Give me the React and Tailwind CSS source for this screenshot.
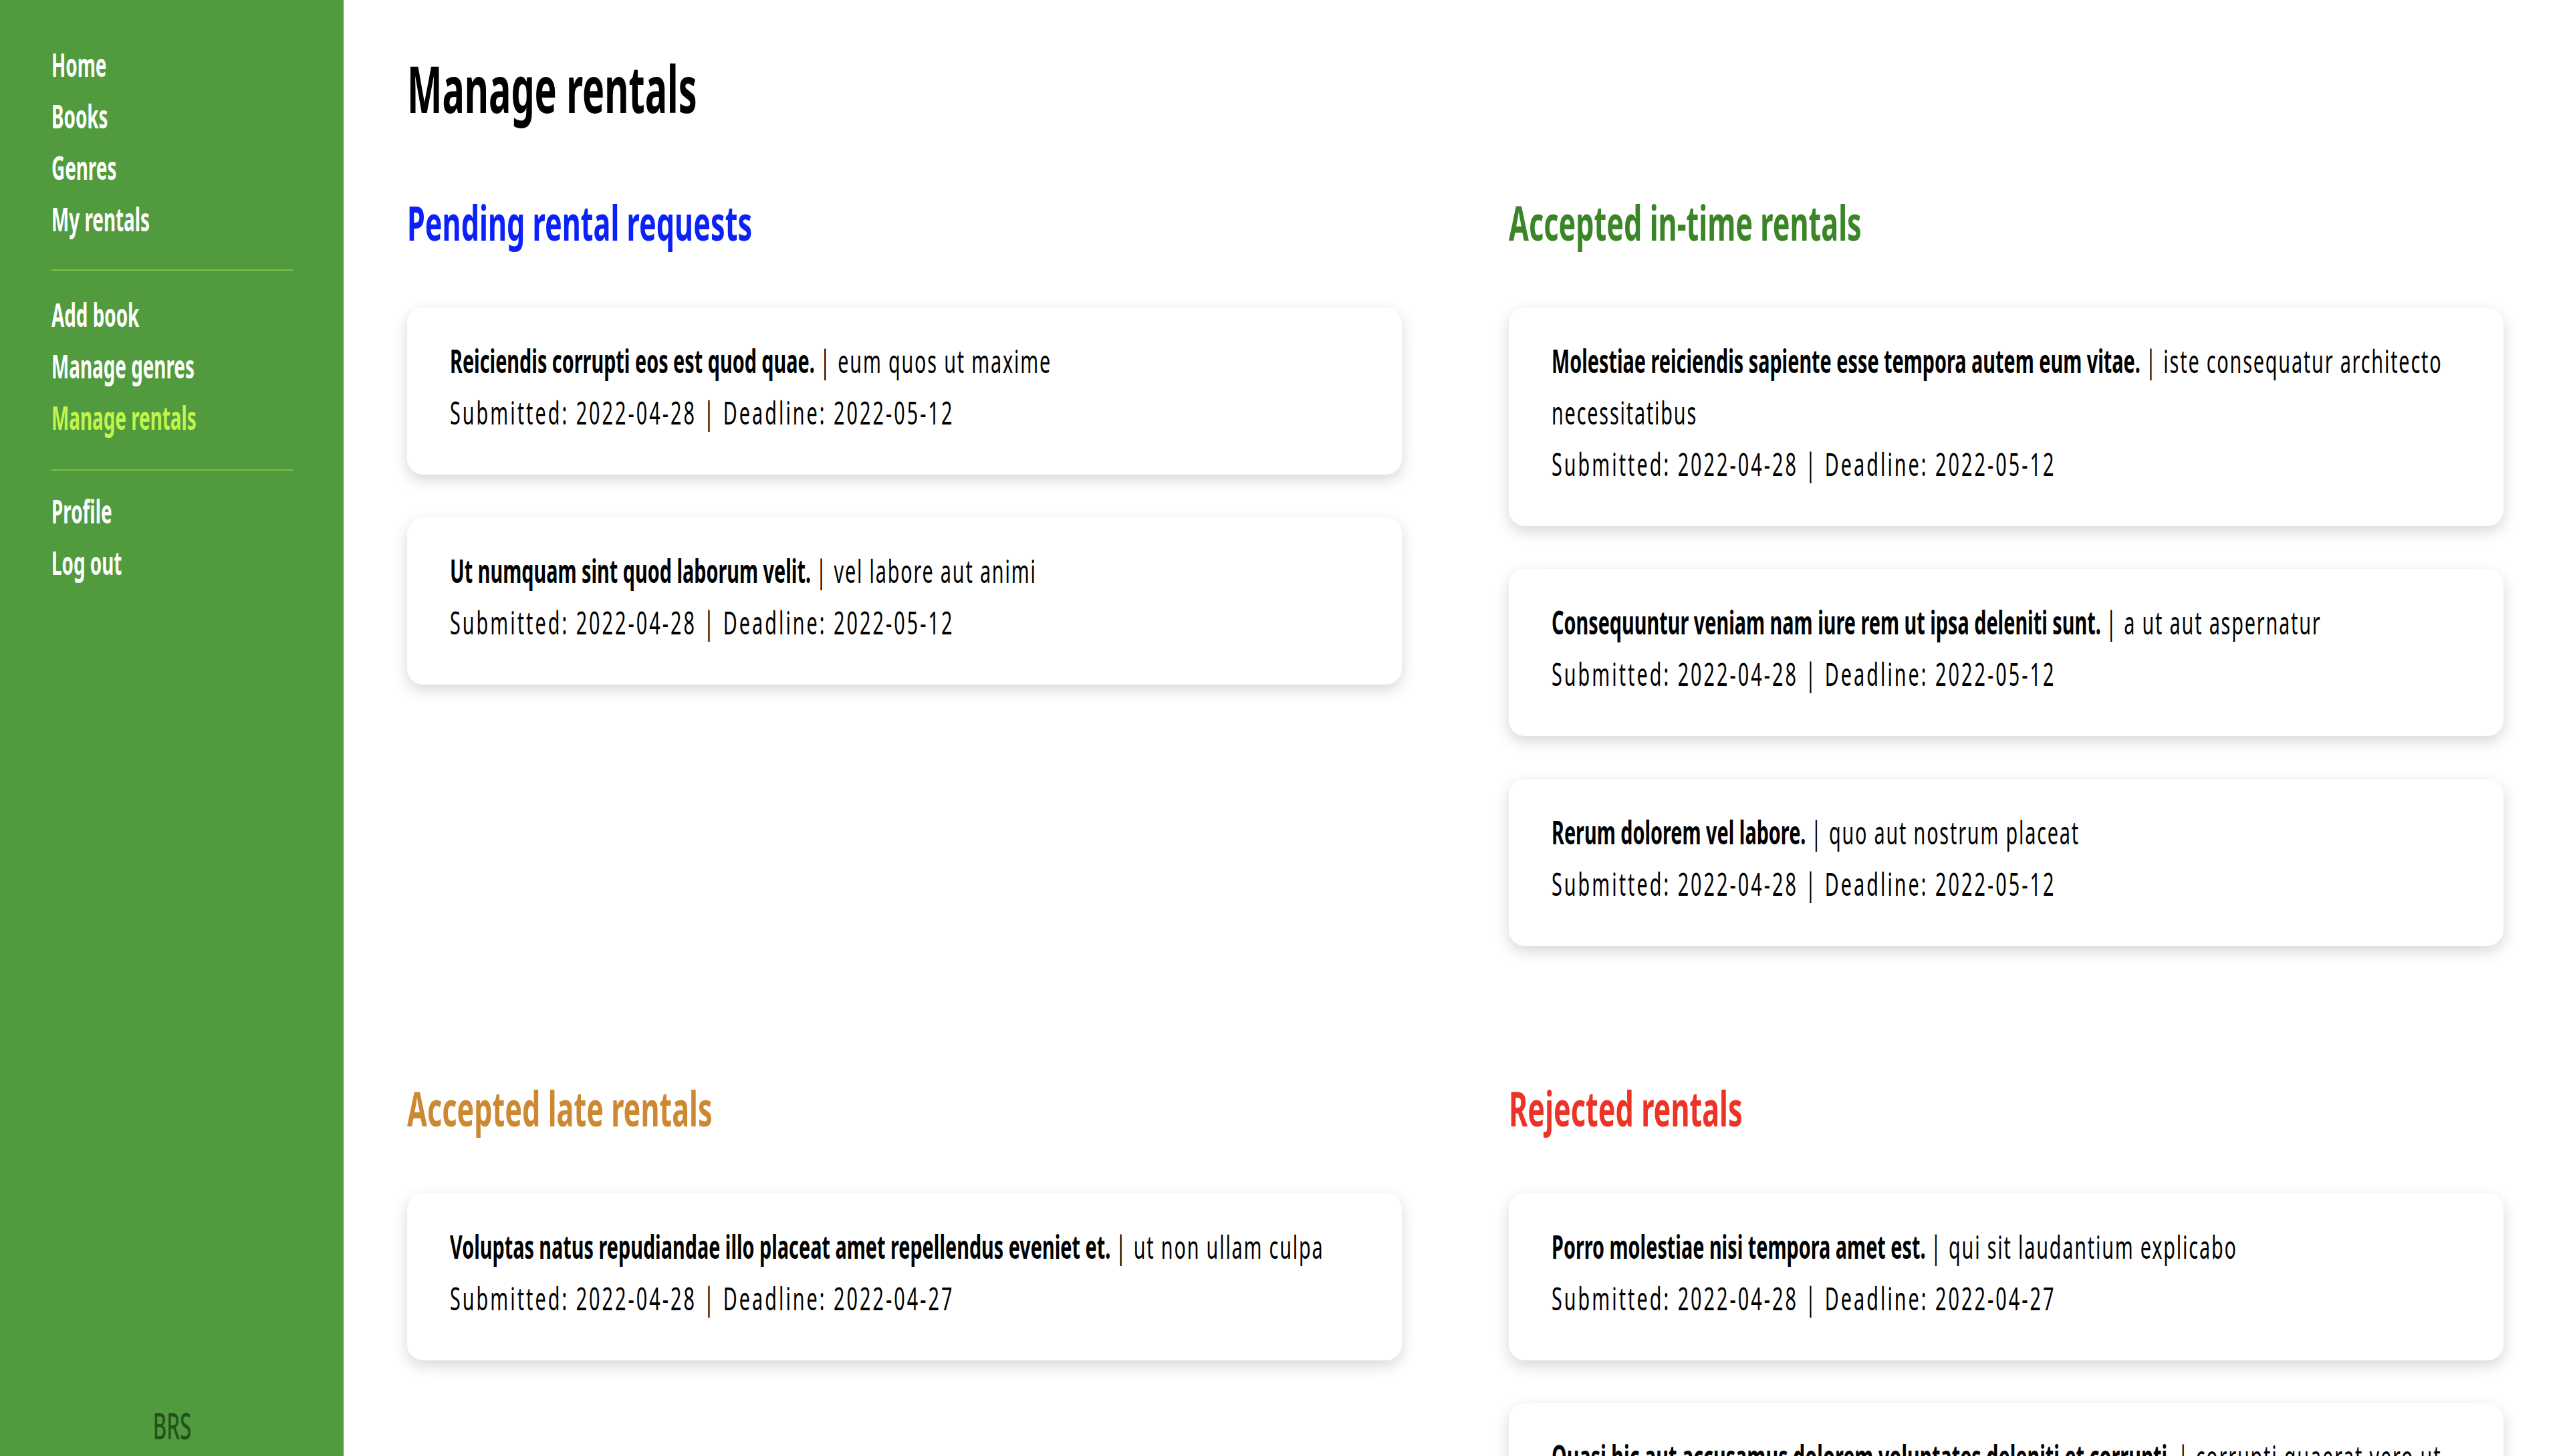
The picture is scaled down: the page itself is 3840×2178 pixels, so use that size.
import React from "react";

const pending = [
  { title: "Reiciendis corrupti eos est quod quae.", author: "eum quos ut maxime", submitted: "2022-04-28", deadline: "2022-05-12" },
  { title: "Ut numquam sint quod laborum velit.", author: "vel labore aut animi", submitted: "2022-04-28", deadline: "2022-05-12" },
];

const inTime = [
  { title: "Molestiae reiciendis sapiente esse tempora autem eum vitae.", author: "iste consequatur architecto", author2: "necessitatibus", submitted: "2022-04-28", deadline: "2022-05-12" },
  { title: "Consequuntur veniam nam iure rem ut ipsa deleniti sunt.", author: "a ut aut aspernatur", submitted: "2022-04-28", deadline: "2022-05-12" },
  { title: "Rerum dolorem vel labore.", author: "quo aut nostrum placeat", submitted: "2022-04-28", deadline: "2022-05-12" },
];

const late = [
  { title: "Voluptas natus repudiandae illo placeat amet repellendus eveniet et.", author: "ut non ullam culpa", submitted: "2022-04-28", deadline: "2022-04-27" },
];

const rejected = [
  { title: "Porro molestiae nisi tempora amet est.", author: "qui sit laudantium explicabo", submitted: "2022-04-28", deadline: "2022-04-27" },
  { title: "Quasi hic aut accusamus dolorem voluptates deleniti et corrupti.", author: "corrupti quaerat vero ut", author2: "enim", submitted: "2022-04-28", deadline: "2022-05-12" },
];

function Card({ r }) {
  return (
    <div className="bg-white rounded-[24px] shadow-[0_8px_22px_rgba(0,0,0,0.16)] px-[64px] pt-[41px] pb-[55px] text-[48px] leading-[77px] font-normal text-black">
      <div className="w-[166.67%] origin-left scale-x-[0.6]">
        <div>
          <span className="font-bold">{r.title}</span>{" "}
          <span className="tracking-[3px]">
            | {r.author}
            {r.author2 ? (
              <>
                <br />
                {r.author2}
              </>
            ) : null}
          </span>
        </div>
        <div className="tracking-[5px]">
          Submitted: {r.submitted} | Deadline: {r.deadline}
        </div>
      </div>
    </div>
  );
}

function Section({ title, color, items }) {
  return (
    <section>
      <h2 className={`text-[72px] leading-[86px] font-bold mb-[85px] whitespace-nowrap ${color}`}>
        <span className="inline-block origin-left scale-x-[0.6]">{title}</span>
      </h2>
      <div className="flex flex-col gap-[64px]">
        {items.map((r, i) => (
          <Card key={i} r={r} />
        ))}
      </div>
    </section>
  );
}

function NavLink({ children, active }) {
  return (
    <a href="#" className={`block whitespace-nowrap text-[48px] leading-[77px] font-bold ${active ? "text-[#c3f44e]" : "text-white"}`}>
      <span className="inline-block origin-left scale-x-[0.58]">{children}</span>
    </a>
  );
}

export default function App() {
  return (
    <div className="flex h-screen overflow-hidden bg-white font-['Noto_Sans','Liberation_Sans',sans-serif]">
      <aside className="w-[514px] shrink-0 bg-[#519b3e] flex flex-col pl-[77px] pr-[76px] pt-[58px] pb-[16px]">
        <nav className="flex flex-col">
          <NavLink>Home</NavLink>
          <NavLink>Books</NavLink>
          <NavLink>Genres</NavLink>
          <NavLink>My rentals</NavLink>
          <div className="h-[2px] bg-[#7cc144] mt-[37px] mb-[27px]" />
          <NavLink>Add book</NavLink>
          <NavLink>Manage genres</NavLink>
          <NavLink active>Manage rentals</NavLink>
          <div className="h-[2px] bg-[#7cc144] mt-[39px] mb-[22px]" />
          <NavLink>Profile</NavLink>
          <NavLink>Log out</NavLink>
        </nav>
        <div className="mt-auto text-center text-[54px] leading-[60px] font-medium text-[#22531a]">
          <span className="inline-block origin-center scale-x-[0.58]">BRS</span>
        </div>
      </aside>
      <main className="flex-1 overflow-hidden px-[95px] pt-[74px]">
        <h1 className="text-[96px] leading-[115px] font-bold text-black mb-[100px] whitespace-nowrap">
          <span className="inline-block origin-left scale-x-[0.58]">Manage rentals</span>
        </h1>
        <div className="grid grid-cols-2 gap-x-[160px] gap-y-[199px]">
          <Section title="Pending rental requests" color="text-[#0a22f8]" items={pending} />
          <Section title="Accepted in-time rentals" color="text-[#3a8526]" items={inTime} />
          <Section title="Accepted late rentals" color="text-[#cd8932]" items={late} />
          <Section title="Rejected rentals" color="text-[#ec3326]" items={rejected} />
        </div>
      </main>
    </div>
  );
}
